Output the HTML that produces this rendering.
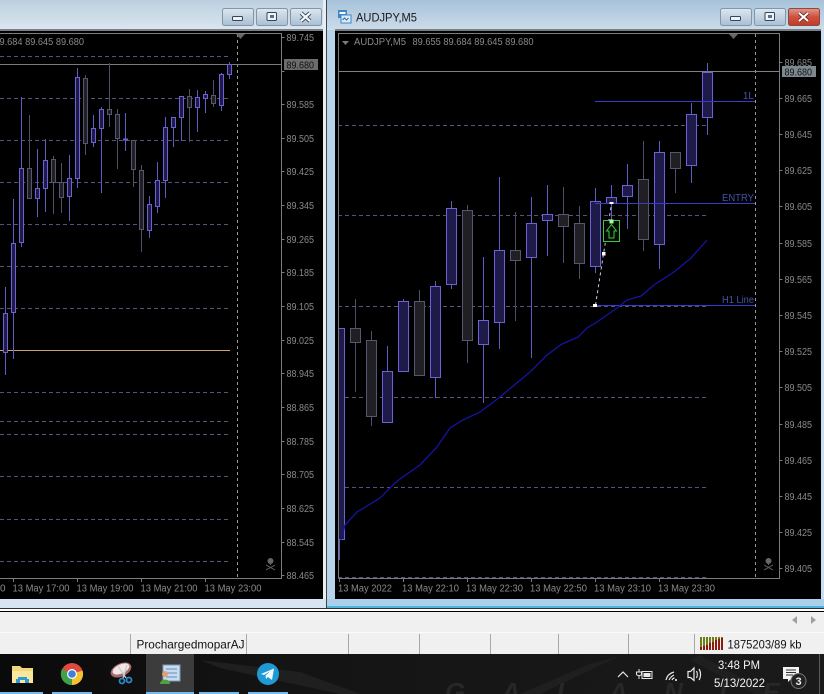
<!DOCTYPE html>
<html><head><meta charset="utf-8"><title>AUDJPY,M5</title>
<style>
html,body{margin:0;padding:0;background:#000;width:824px;height:694px;overflow:hidden}
svg{display:block}
text{font-family:"Liberation Sans",sans-serif}
.ax text{font-size:10px;fill:#8a8a8a}
.wb{fill:none;stroke:#6359c4}
.wd{fill:none;stroke:#504e66}
.bb{fill:#1e1b4a;stroke:#6c62d2}
.bd{fill:#1f1f24;stroke:#575670}
.gr{fill:none;stroke:#55537a;stroke-dasharray:4 3}
.vd{fill:none;stroke:#9a9a9a;stroke-dasharray:3 3}
.b{fill:url(#btn);stroke:#8296a8}
.ic{fill:#eef3f8;stroke:#33455a;stroke-width:1}
.sep{fill:none;stroke:#a8a8a8}
.tr{fill:none;stroke:#e8e8e8;stroke-width:1.2}
</style></head><body>
<svg xmlns="http://www.w3.org/2000/svg" width="824" height="694" viewBox="0 0 824 694">
<defs>
<linearGradient id="t1" x1="0" y1="0" x2="0" y2="1"><stop offset="0" stop-color="#bccfdf"/><stop offset="1" stop-color="#dbe6ef"/></linearGradient>
<linearGradient id="t2" x1="0" y1="0" x2="0" y2="1"><stop offset="0" stop-color="#a6c2da"/><stop offset="1" stop-color="#ccdcea"/></linearGradient>
<linearGradient id="btn" x1="0" y1="0" x2="0" y2="1"><stop offset="0" stop-color="#dce7f1"/><stop offset=".5" stop-color="#c3d3e2"/><stop offset="1" stop-color="#a9bfd3"/></linearGradient>
<linearGradient id="cls" x1="0" y1="0" x2="0" y2="1"><stop offset="0" stop-color="#e09a8c"/><stop offset=".5" stop-color="#d0503e"/><stop offset="1" stop-color="#c23a28"/></linearGradient>
<linearGradient id="tb" x1="0" y1="0" x2="1" y2="0"><stop offset="0" stop-color="#0a0a0a"/><stop offset=".35" stop-color="#141414"/><stop offset="1" stop-color="#1a1a1a"/></linearGradient>
</defs>

<!-- window backgrounds -->
<rect width="824" height="694" fill="#000"/>
<rect x="0" y="0" width="326" height="30" fill="url(#t1)"/>
<rect x="0" y="29" width="323" height="2" fill="#787f86"/>
<rect x="323" y="0" width="3" height="608" fill="#e4eef6"/>
<rect x="0" y="599" width="326" height="9" fill="#d6e5f1"/>
<rect x="326" y="0" width="1" height="608" fill="#444"/>
<rect x="327" y="0" width="497" height="30" fill="url(#t2)"/>
<rect x="327" y="30" width="8" height="578" fill="#b8d4ea"/>
<rect x="821" y="30" width="3" height="578" fill="#c8def0"/>
<rect x="335" y="29" width="486" height="2" fill="#787f86"/>
<rect x="327" y="599" width="497" height="8" fill="#a9cfe9"/>
<rect x="327" y="606" width="497" height="2" fill="#4fb4e2"/>
<rect x="0" y="608" width="824" height="1" fill="#333"/>
<rect x="0" y="609" width="824" height="2" fill="#fff"/>
<rect x="0" y="611" width="824" height="1" fill="#000"/>
<rect x="0" y="612" width="824" height="20" fill="#f0f0f0"/>
<rect x="0" y="632" width="824" height="1" fill="#fbfbfb"/>
<rect x="0" y="633" width="824" height="21" fill="#f0f0f0"/>

<!-- title buttons left -->
<rect class="b" x="222.5" y="8.5" width="31" height="17" rx="2"/>
<rect class="b" x="256.5" y="8.5" width="31" height="17" rx="2"/>
<rect class="b" x="290.5" y="8.5" width="31" height="17" rx="2"/>
<rect class="ic" x="232.5" y="16.5" width="10" height="4" rx="1"/>
<rect class="ic" x="267" y="12.5" width="9.5" height="8" rx="1"/><rect x="270" y="15" width="4" height="3" fill="#5d7083"/>
<path d="M301 13l9 8M310 13l-9 8" stroke="#2f4256" stroke-width="4" fill="none"/><path d="M301 13l9 8M310 13l-9 8" stroke="#f6f8fa" stroke-width="2.2" fill="none"/>
<!-- title buttons right -->
<rect class="b" x="720.5" y="8.5" width="31" height="17" rx="2"/>
<rect class="b" x="754.5" y="8.5" width="31" height="17" rx="2"/>
<rect x="788.5" y="8.5" width="31" height="17" rx="2" fill="url(#cls)" stroke="#8a4a40"/>
<rect class="ic" x="730.5" y="16.5" width="10" height="4" rx="1"/>
<rect class="ic" x="765" y="12.5" width="9.5" height="8" rx="1"/><rect x="768" y="15" width="4" height="3" fill="#5d7083"/>
<path d="M799 13l9 8M808 13l-9 8" stroke="#6a2a20" stroke-width="3.6" fill="none"/><path d="M799 13l9 8M808 13l-9 8" stroke="#fff" stroke-width="2" fill="none"/>
<!-- title icon + text -->
<rect x="338" y="10" width="9" height="8" fill="#3f86c8"/><rect x="339.5" y="12" width="6" height="2" fill="#fff"/>
<rect x="341" y="15" width="10" height="8" fill="#d8ecfa" stroke="#3f86c8"/><path d="M342.5 20l2-2 2 2 2-2" stroke="#2a6aa8" fill="none"/>
<text x="356" y="21.5" font-size="12" fill="#1a1a1a" textLength="61" lengthAdjust="spacingAndGlyphs">AUDJPY,M5</text>

<!-- LEFT CHART -->
<path class="gr" d="M0 56.5H230M0 98.5H230M0 140.5H230M0 182.5H230M0 224.5H230M0 266.5H230M0 308.5H230M0 392.5H230M0 421.5H230M0 434.5H230M0 476.5H230M0 519.5H230M0 561.5H230"/>
<path d="M0 33.5H281.5V578.5H0" fill="none" stroke="#7c7c7c"/>
<path d="M281.5 37.5h3M281.5 71.5h3M281.5 104.5h3M281.5 138.5h3M281.5 171.5h3M281.5 205.5h3M281.5 239.5h3M281.5 272.5h3M281.5 306.5h3M281.5 340.5h3M281.5 373.5h3M281.5 407.5h3M281.5 441.5h3M281.5 474.5h3M281.5 508.5h3M281.5 542.5h3M281.5 575.5h3M13.5 578v4M77.5 578v4M141.5 578v4M205.5 578v4" stroke="#7c7c7c" fill="none"/>
<path class="vd" d="M237.5 34V578"/>
<path d="M0 64.5H281" stroke="#7a7a7a" fill="none"/>
<path d="M0 350.5H230" stroke="#c8a868" fill="none"/>
<path d="M236 34h9l-4.500 5z" fill="#666"/>
<path class="wb" d="M5.500 287V375M13.500 199V359M21.500 97V247M37.500 149V217M45.500 139V212M69.500 155V221M77.500 68V188M93.500 115V147M101.500 107V193M125.500 113V151M149.500 196V238M157.500 162V213M165.500 117V198M173.500 117V147M181.500 96V141M197.500 90V132M205.500 91V113M221.500 73V111M229.500 62V79"/>
<path class="wd" d="M29.500 115V198M53.500 156V214M61.500 163V213M85.500 75V155M109.500 63V127M117.500 109V169M133.500 140V187M141.500 165V252M189.500 89V142M213.500 80V107"/>
<path class="bb" d="M3.500 313.500h4v39h-4zM11.500 243.500h4v69h-4zM19.500 168.500h4v74h-4zM35.500 188.500h4v10h-4zM43.500 160.500h4v28h-4zM67.500 178.500h4v18h-4zM75.500 77.500h4v101h-4zM91.500 128.500h4v14h-4zM99.500 109.500h4v19h-4zM123.500 139h4v1h-4zM147.500 204.500h4v26h-4zM155.500 180.500h4v26h-4zM163.500 127.500h4v53h-4zM171.500 117.500h4v10h-4zM179.500 96.500h4v21h-4zM195.500 97.500h4v10h-4zM203.500 94.500h4v4h-4zM219.500 74.500h4v31h-4zM227.500 64.500h4v10h-4z"/>
<path class="bd" d="M27.500 168.500h4v30h-4zM51.500 159.500h4v23h-4zM59.500 182.500h4v15h-4zM83.500 78.500h4v65h-4zM107.500 109.500h4v5h-4zM115.500 114.500h4v24h-4zM131.500 140.500h4v29h-4zM139.500 170.500h4v59h-4zM187.500 96.500h4v11h-4zM211.500 95.500h4v8h-4z"/>
<text x="-0.500" y="45" font-size="10" fill="#8a8a8a" textLength="84.500" lengthAdjust="spacingAndGlyphs">9.684 89.645 89.680</text>
<g class="ax">
<text x="286.500" y="41" textLength="27.500" lengthAdjust="spacingAndGlyphs">89.745</text><text x="286.500" y="108" textLength="27.500" lengthAdjust="spacingAndGlyphs">89.585</text><text x="286.500" y="142" textLength="27.500" lengthAdjust="spacingAndGlyphs">89.505</text><text x="286.500" y="175" textLength="27.500" lengthAdjust="spacingAndGlyphs">89.425</text><text x="286.500" y="209" textLength="27.500" lengthAdjust="spacingAndGlyphs">89.345</text><text x="286.500" y="243" textLength="27.500" lengthAdjust="spacingAndGlyphs">89.265</text><text x="286.500" y="276" textLength="27.500" lengthAdjust="spacingAndGlyphs">89.185</text><text x="286.500" y="310" textLength="27.500" lengthAdjust="spacingAndGlyphs">89.105</text><text x="286.500" y="344" textLength="27.500" lengthAdjust="spacingAndGlyphs">89.025</text><text x="286.500" y="377" textLength="27.500" lengthAdjust="spacingAndGlyphs">88.945</text><text x="286.500" y="411" textLength="27.500" lengthAdjust="spacingAndGlyphs">88.865</text><text x="286.500" y="445" textLength="27.500" lengthAdjust="spacingAndGlyphs">88.785</text><text x="286.500" y="478" textLength="27.500" lengthAdjust="spacingAndGlyphs">88.705</text><text x="286.500" y="512" textLength="27.500" lengthAdjust="spacingAndGlyphs">88.625</text><text x="286.500" y="546" textLength="27.500" lengthAdjust="spacingAndGlyphs">88.545</text><text x="286.500" y="579" textLength="27.500" lengthAdjust="spacingAndGlyphs">88.465</text>
<text x="0" y="591.500">0</text>
<text x="12.500" y="591.500" textLength="57" lengthAdjust="spacingAndGlyphs">13 May 17:00</text><text x="76.500" y="591.500" textLength="57" lengthAdjust="spacingAndGlyphs">13 May 19:00</text><text x="140.500" y="591.500" textLength="57" lengthAdjust="spacingAndGlyphs">13 May 21:00</text><text x="204.500" y="591.500" textLength="57" lengthAdjust="spacingAndGlyphs">13 May 23:00</text>
</g>
<rect x="284" y="59" width="34" height="11" fill="#6c6c6c"/>
<text x="286.500" y="68.500" font-size="10" fill="#111" textLength="27.500" lengthAdjust="spacingAndGlyphs">89.680</text>
<g fill="none" stroke="#666"><circle cx="270.500" cy="561" r="2.500" fill="#666"/><path d="M266 565l9 5M275 565l-9 5M270.500 564v1"/></g>
<g fill="none" stroke="#666"><circle cx="768.500" cy="561" r="2.500" fill="#666"/><path d="M764 565l9 5M773 565l-9 5M768.500 564v1"/></g>

<!-- RIGHT CHART -->
<path class="gr" d="M338 125.500H709M338 215.500H709M338 306.500H709M338 397.500H709M338 487.500H709M338 577.500H709"/>
<path d="M338.500 578.500V33.500H779.500V578.500H338.500" fill="none" stroke="#7c7c7c"/>
<path d="M779.500 62.500h3M779.500 98.500h3M779.500 134.500h3M779.500 170.500h3M779.500 206.500h3M779.500 243.500h3M779.500 279.500h3M779.500 315.500h3M779.500 351.500h3M779.500 387.500h3M779.500 424.500h3M779.500 460.500h3M779.500 496.500h3M779.500 532.500h3M779.500 568.500h3M339.500 578v4M403.500 578v4M467.500 578v4M531.500 578v4M595.500 578v4M659.500 578v4" stroke="#7c7c7c" fill="none"/>
<path class="vd" d="M755.500 34V578"/>
<path d="M338 71.500H780" stroke="#808080" fill="none"/>
<path d="M729 34h9l-4.500 5z" fill="#666"/>
<path d="M342 41h7l-3.500 4z" fill="#7a7a7a"/>
<text x="354" y="45" font-size="10" fill="#8a8a8a" textLength="52" lengthAdjust="spacingAndGlyphs">AUDJPY,M5</text>
<text x="412.500" y="45" font-size="10" fill="#8a8a8a" textLength="121" lengthAdjust="spacingAndGlyphs">89.655 89.684 89.645 89.680</text>

<path class="wb" d="M339.500 539V560M387.500 346V423M403.500 299V371M435.500 281V398M451.500 201V289M483.500 257V403M499.500 177V349M531.500 197V358M547.500 185V256M595.500 188V273M611.500 185V240M627.500 164V229M659.500 141V269M691.500 103V183M707.500 63V135"/>
<path class="wd" d="M355.500 299V392M371.500 331V426M419.500 290V375M467.500 205V363M515.500 212V321M563.500 187V263M579.500 206V279M643.500 141V251M675.500 152V193"/>
<rect x="339" y="329" width="5" height="210" fill="#1e1b4a"/>
<path d="M339 328.500H344.500V539.500H339" fill="none" stroke="#6c62d2"/>
<path class="bb" d="M382.500 371.500h10v51h-10zM398.500 301.500h10v70h-10zM430.500 286.500h10v91h-10zM446.500 208.500h10v76h-10zM478.500 320.500h10v24h-10zM494.500 250.500h10v72h-10zM526.500 223.500h10v34h-10zM542.500 214.500h10v6h-10zM590.500 201.500h10v65h-10zM606.500 197.500h10v6h-10zM622.500 185.500h10v11h-10zM654.500 152.500h10v92h-10zM686.500 114.500h10v51h-10zM702.500 72.500h10v45h-10z"/>
<path class="bd" d="M350.500 328.500h10v14h-10zM366.500 340.500h10v76h-10zM414.500 301.500h10v74h-10zM462.500 210.500h10v130h-10zM510.500 250.500h10v10h-10zM558.500 214.500h10v12h-10zM574.500 223.500h10v40h-10zM638.500 179.500h10v60h-10zM670.500 152.500h10v16h-10z"/>
<!-- blue lines -->
<path d="M595 101.500H755M595 203.500H755M595 305.500H755" stroke="#3a3ad0" fill="none"/>
<!-- MA -->
<path d="M341 540L345 525L357 512L380 498L395 483L400 479L420 465L437 447L450 428L463 420L480 412L500 397L530 372L547 355L562 344L578 337L587 328L597 322L617 308L627 300L641 296L654 285L674 272L691 258L707 240" fill="none" stroke="#1414a4" stroke-width="1.300"/>
<text x="754" y="99" font-size="10" fill="#4454a8" text-anchor="end">1L</text>
<text x="754" y="201" font-size="10" fill="#4454a8" text-anchor="end" textLength="32" lengthAdjust="spacingAndGlyphs">ENTRY</text>
<text x="754" y="303" font-size="10" fill="#4454a8" text-anchor="end" textLength="32" lengthAdjust="spacingAndGlyphs">H1 Line</text>
<!-- signal -->
<path d="M595.500 305L603.500 254L611.500 204" fill="none" stroke="#c8c8e8" stroke-dasharray="3 3"/>
<rect x="593" y="304" width="4" height="3" fill="#fff"/><rect x="602" y="252" width="3.500" height="3.500" fill="#fff"/><rect x="609.500" y="202" width="4" height="2" fill="#fff"/>
<rect x="603.500" y="220.500" width="16" height="21" fill="#050a05" stroke="#3cc83c"/>
<path d="M611.500 224.500l5 6.500h-2.500v7h-5v-7h-2.500z" fill="none" stroke="#3cc83c"/>
<rect x="609.500" y="219.500" width="4" height="4" fill="#a0ffa0"/>
<g class="ax">
<text x="784.500" y="66" textLength="27.500" lengthAdjust="spacingAndGlyphs">89.685</text><text x="784.500" y="102" textLength="27.500" lengthAdjust="spacingAndGlyphs">89.665</text><text x="784.500" y="138" textLength="27.500" lengthAdjust="spacingAndGlyphs">89.645</text><text x="784.500" y="174" textLength="27.500" lengthAdjust="spacingAndGlyphs">89.625</text><text x="784.500" y="210" textLength="27.500" lengthAdjust="spacingAndGlyphs">89.605</text><text x="784.500" y="247" textLength="27.500" lengthAdjust="spacingAndGlyphs">89.585</text><text x="784.500" y="283" textLength="27.500" lengthAdjust="spacingAndGlyphs">89.565</text><text x="784.500" y="319" textLength="27.500" lengthAdjust="spacingAndGlyphs">89.545</text><text x="784.500" y="355" textLength="27.500" lengthAdjust="spacingAndGlyphs">89.525</text><text x="784.500" y="391" textLength="27.500" lengthAdjust="spacingAndGlyphs">89.505</text><text x="784.500" y="428" textLength="27.500" lengthAdjust="spacingAndGlyphs">89.485</text><text x="784.500" y="464" textLength="27.500" lengthAdjust="spacingAndGlyphs">89.465</text><text x="784.500" y="500" textLength="27.500" lengthAdjust="spacingAndGlyphs">89.445</text><text x="784.500" y="536" textLength="27.500" lengthAdjust="spacingAndGlyphs">89.425</text><text x="784.500" y="572" textLength="27.500" lengthAdjust="spacingAndGlyphs">89.405</text>
<text x="338" y="591.500" textLength="54" lengthAdjust="spacingAndGlyphs">13 May 2022</text><text x="402" y="591.500" textLength="57" lengthAdjust="spacingAndGlyphs">13 May 22:10</text><text x="466" y="591.500" textLength="57" lengthAdjust="spacingAndGlyphs">13 May 22:30</text><text x="530" y="591.500" textLength="57" lengthAdjust="spacingAndGlyphs">13 May 22:50</text><text x="594" y="591.500" textLength="57" lengthAdjust="spacingAndGlyphs">13 May 23:10</text><text x="658" y="591.500" textLength="57" lengthAdjust="spacingAndGlyphs">13 May 23:30</text>
</g>
<rect x="782" y="66" width="34" height="11" fill="#7d8990"/>
<text x="784.500" y="75.500" font-size="10" fill="#111" textLength="27.500" lengthAdjust="spacingAndGlyphs">89.680</text>

<!-- toolbar strip -->
<path d="M797 616v8l-5-4zM811 616v8l5-4z" fill="#a0a0a0"/>
<path class="sep" d="M130.500 634V654M246.500 634V654M348.500 634V654M419.500 634V654M490.500 634V654M558.500 634V654M628.500 634V654M694.500 634V654"/>
<text x="136.500" y="648.500" font-size="12" fill="#111" textLength="108" lengthAdjust="spacingAndGlyphs">ProchargedmoparAJ</text>
<text x="727.500" y="648.500" font-size="12" fill="#111" textLength="74" lengthAdjust="spacingAndGlyphs">1875203/89 kb</text>
<!-- connection bars -->
<g stroke-width="2">
<path d="M701 637V650M704 637V650M707 637V650M710 637V650M713 637V650M716 637V650M719 637V650M722 637V650" stroke="#6d7f12" fill="none"/>
<path d="M701 647V650M704 646V650M707 645V650M710 643V650M713 642V650M716 640V650M719 639V650M722 638V650" stroke="#8e1a10" fill="none"/>
</g>

<!-- TASKBAR -->
<rect x="0" y="654" width="824" height="40" fill="url(#tb)"/>
<path d="M200 660L300 672L360 694H340L220 668zM520 694L590 664L620 656L540 694zM700 655L770 694H755L690 660z" fill="#1f1f1f"/>
<text x="445" y="701" font-size="26" font-style="italic" font-weight="bold" fill="#272727" textLength="335" lengthAdjust="spacing">GALANIE</text>
<rect x="146" y="654" width="48" height="40" fill="#3c3c3c"/>
<rect x="819" y="654" width="1" height="40" fill="#5a5a5a"/>
<path d="M0 692h43v2H0zM52 692h40v2H52zM146 692h48v2h-48zM199 692h40v2h-40zM248 692h40v2h-40z" fill="#76b9ed"/>
<!-- folder -->
<path d="M12 666h8l2 2h11v15H12z" fill="#f3d67a"/><path d="M12 671h21v12H12z" fill="#fbe79b"/><path d="M18 680h9v-3h-9zM16 683h4v-4h-4zM25 683h4v-4h-4z" fill="#2f9ad8"/>
<!-- chrome -->
<circle cx="72" cy="674" r="11" fill="#dd4b3c"/>
<path d="M72 685A11 11 0 0 0 82.500 670.500L72 674z" fill="#f4c430"/>
<path d="M72 685A11 11 0 0 1 62 669L72 674z" fill="#3fa14a"/>
<circle cx="72" cy="674" r="5" fill="#fff"/><circle cx="72" cy="674" r="3.800" fill="#3f7fe0"/>
<!-- scissors -->
<ellipse cx="121" cy="670" rx="11" ry="6.500" fill="#a86a6a" transform="rotate(-25 121 670)"/>
<ellipse cx="121" cy="669" rx="9" ry="4.500" fill="#f0e6e6" transform="rotate(-25 121 669)"/>
<path d="M118 666l8 12M127 665l-4 13" stroke="#c8ccd4" stroke-width="1.300" fill="none"/>
<circle cx="122" cy="681" r="2.500" fill="none" stroke="#2a8ac8" stroke-width="1.800"/><circle cx="129" cy="680" r="2.500" fill="none" stroke="#2a8ac8" stroke-width="1.800"/>
<!-- mt4 -->
<rect x="163" y="665" width="17" height="16" fill="#c8dcf0" stroke="#7a9ac0"/><path d="M166 669h11M166 673h11M166 677h11" stroke="#6a8ab8" fill="none"/>
<circle cx="165" cy="674" r="3" fill="#e0a070"/><path d="M160 684c0-6 10-6 10 0z" fill="#4fa040"/>
<!-- telegram -->
<circle cx="268" cy="674" r="11" fill="#1f9ad4"/><path d="M261 674l13-5.500-2 11.500-4-3-2 2-.5-3.500 5-4.500-6.500 4z" fill="#f4fbff"/>
<!-- tray -->
<path class="tr" d="M618 677l5-5 5 5"/>
<rect x="642" y="671.500" width="10" height="7" fill="none" stroke="#e8e8e8"/><rect x="643.500" y="673" width="7" height="4" fill="#e8e8e8"/><path d="M639 669v3M636.500 672h5v2c0 2-5 2-5 0zM639 676v3" stroke="#e8e8e8" fill="none"/>
<path class="tr" d="M666 680c1-4 4-7 8-8M669 680c1-2 3-4 5-5M672 680c.5-1 1-2 2.500-2"/><circle cx="676" cy="680" r="1" fill="#fff"/>
<path class="tr" d="M688 671.500v6h2.500l3.500 3v-12.500l-3.500 3.500zM696.500 671c1 2 1 5 0 7M699 669c2 3 2 8 0 11"/>
<text x="739" y="669" font-size="12" fill="#f4f4f4" text-anchor="middle" textLength="42" lengthAdjust="spacingAndGlyphs">3:48 PM</text>
<text x="739.500" y="687" font-size="12" fill="#f4f4f4" text-anchor="middle" textLength="51" lengthAdjust="spacingAndGlyphs">5/13/2022</text>
<path d="M783 667h16v12h-8l-3 3v-3h-5z" fill="#f2f2f2"/><path d="M786 670h10M786 672.500h10M786 675h7" stroke="#333" fill="none"/>
<circle cx="798.500" cy="681" r="7.500" fill="#222" stroke="#777"/>
<text x="798.500" y="685" font-size="11" font-weight="bold" fill="#eee" text-anchor="middle">3</text>
</svg>
</body></html>
